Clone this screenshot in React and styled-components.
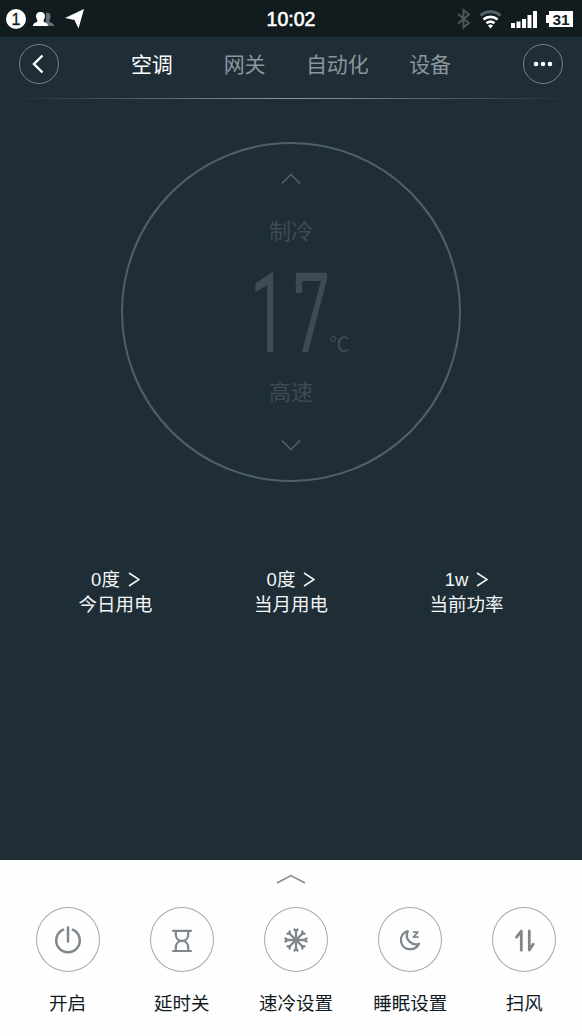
import React from "react"
import styled, { createGlobalStyle } from "styled-components"

const GlobalStyle = createGlobalStyle`
    * {
        box-sizing: border-box;
    }
    body {
        margin: 0;
        background: #1f2e36;
        font-family: "Liberation Sans", "Noto Sans CJK SC", sans-serif;
    }
    svg {
        display: block;
        flex: none;
    }
    p {
        margin: 0;
    }
`

const Screen = styled.main`
    display: flex;
    flex-direction: column;
    width: 582px;
    height: 1036px;
    overflow: hidden;
    background: #1f2e36;
`

const StatusBar = styled.div`
    display: grid;
    grid-template-columns: 1fr auto 1fr;
    align-items: center;
    height: 37px;
    padding: 0 9px 0 6px;
    background: #121c1e;
    color: #fff;
`

const StatusGroup = styled.div`
    display: flex;
    align-items: center;
    justify-content: ${props => props.$end ? "flex-end" : "flex-start"};
`

const Clock = styled.p`
    padding: 1px 0 0 3px;
    font-size: 19.5px;
    line-height: 22px;
    -webkit-text-stroke: 0.6px #fff;
`

const Notice = styled.span`
    width: 20px;
    height: 20px;
    border-radius: 50%;
    background: #fff;
    color: #121c1e;
    font-size: 16px;
    line-height: 21px;
    text-align: center;
    -webkit-text-stroke: 0.3px #121c1e;
`

const Battery = styled.span`
    display: flex;
    align-items: center;
    margin-left: 9px;
    &::before {
        content: "";
        width: 3px;
        height: 8px;
        background: #fff;
    }
`

const BatteryLevel = styled.span`
    width: 24px;
    height: 16px;
    background: #fff;
    color: #121c1e;
    font-size: 15.5px;
    font-weight: bold;
    line-height: 17px;
    text-align: center;
`

const Header = styled.header`
    display: flex;
    align-items: center;
    justify-content: space-between;
    height: 61px;
    padding: 0 19px 7px;
`

const RoundButton = styled.button`
    display: flex;
    align-items: center;
    justify-content: center;
    width: 40px;
    height: 40px;
    padding: 0;
    border: 1px solid #77828a;
    border-radius: 50%;
    background: none;
    color: #fff;
`

const Tabs = styled.nav`
    display: grid;
    grid-template-columns: repeat(4, 1fr);
    width: 371px;
    padding-top: 2px;
`

const Tab = styled.a`
    color: ${props => props.$active ? "#fff" : "#8b959b"};
    font-size: 21px;
    line-height: 30px;
    text-align: center;
    white-space: nowrap;
`

const Divider = styled.div`
    height: 1px;
    background: linear-gradient(to right, transparent 2%, #8b9599 48%, #8b9599 52%, transparent 98%);
`

const Dial = styled.section`
    display: flex;
    flex-direction: column;
    align-items: center;
    width: 340px;
    height: 340px;
    margin: 43px auto 0;
    padding-top: 29px;
    border: 2px solid #50606a;
    border-radius: 50%;
    color: #3c4b54;
`

const Mode = styled.p`
    font-size: 22px;
    line-height: 30px;
`

const Temperature = styled.div`
    display: flex;
    align-items: flex-end;
    height: 80px;
    margin: 27px 0 24px;
`

const Degrees = styled.p`
    position: relative;
    width: 80px;
    margin-left: 17px;
    font-family: Roboto, sans-serif;
    font-size: 112px;
    font-weight: 400;
    line-height: 80px;
    white-space: nowrap;
    transform: scaleX(0.58);
    transform-origin: left center;
    /* short downstroke on the bar of the seven */
    &::after {
        content: "";
        position: absolute;
        top: 1px;
        left: 79px;
        width: 11px;
        height: 18px;
        background: #3c4b54;
    }
`

const Digit = styled.span`
    margin-left: ${props => props.$gap || 0}px;
`

const Unit = styled.span`
    font-family: "Noto Sans CJK SC", sans-serif;
    font-size: 20px;
    font-weight: 400;
    line-height: 20px;
`

const Stats = styled.section`
    display: grid;
    grid-template-columns: repeat(3, 175.5px);
    justify-content: center;
    margin-top: 85px;
    color: #f4f7f8;
    font-size: 18.5px;
    line-height: 25px;
    text-align: center;
`

const StatValue = styled.p`
    display: flex;
    align-items: center;
    justify-content: center;
    gap: 8px;
`

const Drawer = styled.footer`
    display: flex;
    flex-direction: column;
    align-items: center;
    height: 176px;
    margin-top: auto;
    padding-top: 14px;
    background: #fefefe;
`

const Actions = styled.div`
    display: grid;
    grid-template-columns: repeat(5, 114.2px);
    margin: 23px 0 0 10px;
`

const Action = styled.div`
    display: flex;
    flex-direction: column;
    align-items: center;
    gap: 18px;
    color: #101a1f;
    font-size: 18.5px;
    line-height: 28px;
    white-space: nowrap;
`

const ActionCircle = styled.span`
    display: flex;
    align-items: center;
    justify-content: center;
    width: 64px;
    height: 65px;
    border: 1px solid #a5abae;
    border-radius: 50%;
    color: #7f878c;
`

function Chevron({ w, h, d, stroke = "currentColor", size = 1.5 }){
    return (
        <svg width={w} height={h} fill="none" stroke={stroke} strokeWidth={size}>
            <path d={d} />
        </svg>
    )
}

function ActionIcon({ children }){
    return (
        <svg width="32" height="32" viewBox="0 0 32 32" fill="none" stroke="currentColor" strokeWidth="2" strokeLinecap="round" strokeLinejoin="round">
            {children}
        </svg>
    )
}

const PowerIcon = () => (
    <ActionIcon>
        <path strokeWidth="2.5" d="M11.2 5.7A11.8 11.8 0 1 0 20.8 5.7M16 3.5V17.5" />
    </ActionIcon>
)

const HourglassIcon = () => (
    <ActionIcon>
        <path strokeWidth="2.2" d="M7 6.8H25M7 27H25M9.8 7V10.5C9.8 14 12 16.9 16 16.9S22.2 14 22.2 10.5V7M9.8 27V23.5C9.8 20 12 16.9 16 16.9S22.2 20 22.2 23.5V27" />
    </ActionIcon>
)

const SnowIcon = () => (
    <ActionIcon>
        {[0, 45, 90, 135, 180, 225, 270, 315].map(angle => (
            <path key={angle} transform={`rotate(${angle} 16 16)`} strokeWidth="2.4" d="M16 16V7.5M14.5 5.5L16 7.5L17.5 5.5" />
        ))}
    </ActionIcon>
)

const MoonIcon = () => (
    <ActionIcon>
        <path strokeWidth="2.3" d="M13.8 7.2C8.6 8.4 5.9 13.1 7.2 18.2C8.3 22.7 12.1 25.4 16.6 25.2C20.4 25 23.4 23 25 19.7C22 21 18.3 20.3 15.6 17.7C12.7 14.9 12.1 10.8 13.8 7.2Z" />
        <path strokeWidth="1.6" d="M19.5 8.1H24L19.3 13.1H24.2" />
    </ActionIcon>
)

const SwingIcon = () => (
    <ActionIcon>
        <path strokeWidth="2.8" d="M8.5 13.2L13.3 7V26.3M21.3 7V26L25.2 20.2" />
    </ActionIcon>
)

const tabs = ["空调", "网关", "自动化", "设备"]

const stats = [
    { value: "0度", label: "今日用电" },
    { value: "0度", label: "当月用电" },
    { value: "1w", label: "当前功率" },
]

const actions = [
    { label: "开启", Icon: PowerIcon },
    { label: "延时关", Icon: HourglassIcon },
    { label: "速冷设置", Icon: SnowIcon },
    { label: "睡眠设置", Icon: MoonIcon },
    { label: "扫风", Icon: SwingIcon },
]

function Status(){
    return (
        <StatusBar>
            <StatusGroup>
                <Notice>1</Notice>
                <svg width="58" height="24" viewBox="0 0 58 24">
                    <path fill="#637079" d="M20 6c3-1 5 1 4.500 4.500c-.3 2-1.500 2.500-1.200 4c.8 1 4.700 1.200 4.700 4.500H20z" />
                    <path fill="#fff" d="M14.500 5c3 0 4.800 2 4.400 5c-.3 2-1.500 2.700-1.300 4.300c.8 1.500 4.400 1.200 4.400 4.700H7c0-3.500 3.700-3.200 4.400-4.700c.2-1.600-1-2.300-1.300-4.300C9.700 7 11.500 5 14.500 5z" />
                    <path fill="#fff" d="M58 2L52.500 21.500L48.500 13L39 11z" />
                </svg>
            </StatusGroup>
            <Clock>10:02</Clock>
            <StatusGroup $end>
                <svg width="83" height="24" viewBox="0 0 83 24" fill="none">
                    <path stroke="#4b575d" strokeWidth="2" d="M4 7L15 16L9.500 20.500V3L15 7.500L4 16.500" />
                    <path stroke="#55636a" strokeWidth="2.8" d="M26.500 8.500C32.500 3.500 40.500 3.500 46.500 8.500" />
                    <path stroke="#fff" strokeWidth="2.8" d="M29.500 12.500C33.500 9 39.500 9 43.500 12.500M32.500 16.300C35 14.200 38 14.200 40.500 16.300" />
                    <path fill="#fff" d="M34 18.500Q36.500 16.700 39 18.500L36.500 21.500z" />
                    <path fill="#fff" d="M57 16h4v5h-4zM62.500 14.500h4V21h-4zM68 12h4v9h-4zM73.500 8h4v13h-4zM79 4h4v17h-4z" />
                </svg>
                <Battery>
                    <BatteryLevel>31</BatteryLevel>
                </Battery>
            </StatusGroup>
        </StatusBar>
    )
}

export default function App(){
    return (
        <Screen>
            <GlobalStyle />
            <Status />
            <Header>
                <RoundButton aria-label="返回">
                    <Chevron w={16} h={20} size={2.4} d="M11.500 1.500L3 10L11.500 18.500" />
                </RoundButton>
                <Tabs>
                    {tabs.map((tab, i) => <Tab key={tab} $active={i === 0}>{tab}</Tab>)}
                </Tabs>
                <RoundButton aria-label="更多">
                    <svg width="20" height="6" fill="currentColor">
                        <circle cx="3" cy="3" r="2.3" />
                        <circle cx="10" cy="3" r="2.3" />
                        <circle cx="17" cy="3" r="2.3" />
                    </svg>
                </RoundButton>
            </Header>
            <Divider />
            <Dial>
                <Chevron w={20} h={44} stroke="#53626b" d="M1 10.500L10 1.500L19 10.500" />
                <Mode>制冷</Mode>
                <Temperature>
                    <Degrees><Digit>1</Digit><Digit $gap={12}>7</Digit></Degrees>
                    <Unit>℃</Unit>
                </Temperature>
                <Mode>高速</Mode>
                <Chevron w={20} h={44} stroke="#53626b" d="M1 32.500L10 41.500L19 32.500" />
            </Dial>
            <Stats>
                {stats.map(stat => (
                    <div key={stat.label}>
                        <StatValue>
                            {stat.value}
                            <Chevron w={12} h={16} d="M1 1L11 7.500L1 14" />
                        </StatValue>
                        <p>{stat.label}</p>
                    </div>
                ))}
            </Stats>
            <Drawer>
                <Chevron w={30} h={10} stroke="#848b90" d="M1 9L15 1.500L29 9" />
                <Actions>
                    {actions.map(({ label, Icon }) => (
                        <Action key={label}>
                            <ActionCircle><Icon /></ActionCircle>
                            {label}
                        </Action>
                    ))}
                </Actions>
            </Drawer>
        </Screen>
    )
}
